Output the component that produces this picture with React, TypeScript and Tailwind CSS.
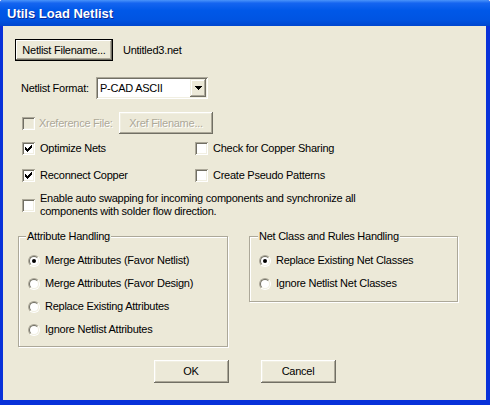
import React from "react";

const CHECK_RUNS: [number, number, number][] = [
  [6, 0, 1],
  [5, 1, 2],
  [0, 2, 1],
  [4, 2, 3],
  [0, 3, 2],
  [3, 3, 3],
  [0, 4, 5],
  [1, 5, 3],
  [2, 6, 1],
];

const CheckMark = ({ color = "#000" }: { color?: string }) => (
  <svg width="7" height="7" viewBox="0 0 7 7" shapeRendering="crispEdges">
    {CHECK_RUNS.map(([x, y, w], i) => (
      <rect key={i} x={x} y={y} width={w} height={1} fill={color} />
    ))}
  </svg>
);

const Checkbox = ({ checked = false, disabled = false }: { checked?: boolean; disabled?: boolean }) => (
  <span
    className={
      "flex size-[13px] shrink-0 items-center justify-center shadow-[inset_1px_1px_#aca899,inset_-1px_-1px_#fff,inset_2px_2px_#716f64,inset_-2px_-2px_#f1efe2] " +
      (disabled ? "bg-[#ece9d8]" : "bg-white")
    }
  >
    {checked && <CheckMark />}
  </span>
);

const Radio = ({ checked = false }: { checked?: boolean }) => (
  <span className="flex size-[12px] shrink-0 items-center justify-center rounded-full border border-t-[#aca899] border-l-[#aca899] border-b-white border-r-white">
    <span className="flex size-[10px] items-center justify-center rounded-full border border-t-[#716f64] border-l-[#716f64] border-b-[#f1efe2] border-r-[#f1efe2] bg-white">
      {checked && <span className="size-[4px] rounded-full bg-black" />}
    </span>
  </span>
);

const Button = ({
  label,
  width,
  height = 22,
  disabled = false,
  focused = false,
}: {
  label: string;
  width: string;
  height?: number;
  disabled?: boolean;
  focused?: boolean;
}) => (
  <div
    className={
      "flex shrink-0 items-center justify-center bg-[#ece9d8] " +
      width +
      (height === 23 ? " h-[23px]" : " h-[22px]") +
      (focused
        ? " shadow-[inset_0_0_0_1px_#000,inset_-2px_-2px_#716f64,inset_2px_2px_#fff,inset_-3px_-3px_#aca899]"
        : " shadow-[inset_-1px_-1px_#716f64,inset_1px_1px_#fff,inset_-2px_-2px_#aca899,inset_2px_2px_#f1efe2]")
    }
  >
    <span className={disabled ? "text-[#aca899] [text-shadow:1px_1px_#fff]" : ""}>{label}</span>
  </div>
);

const Combo = () => (
  <div className="flex h-[22px] w-[112px] items-center justify-between bg-white pl-[4px] pr-[2px] shadow-[inset_1px_1px_#aca899,inset_-1px_-1px_#fff,inset_2px_2px_#716f64,inset_-2px_-2px_#f1efe2]">
    <span>P-CAD ASCII</span>
    <div className="flex h-[18px] w-[16px] items-center justify-center bg-[#ece9d8] shadow-[inset_-1px_-1px_#716f64,inset_1px_1px_#f1efe2,inset_-2px_-2px_#aca899,inset_2px_2px_#fff]">
      <svg width="7" height="4" viewBox="0 0 7 4" shapeRendering="crispEdges">
        <rect x="0" y="0" width="7" height="1" fill="#000" />
        <rect x="1" y="1" width="5" height="1" fill="#000" />
        <rect x="2" y="2" width="3" height="1" fill="#000" />
        <rect x="3" y="3" width="1" height="1" fill="#000" />
      </svg>
    </div>
  </div>
);

const GroupBox = ({
  title,
  className,
  labelOffset,
  children,
}: {
  title: string;
  className: string;
  labelOffset: string;
  children: React.ReactNode;
}) => (
  <div
    className={
      "relative shrink-0 border border-[#aca899] pl-[9px] pt-[12px] shadow-[inset_1px_1px_#fff,1px_1px_#fff] " + className
    }
  >
    <span className={"absolute top-[-7px] bg-[#ece9d8] px-[1px] leading-[13px] " + labelOffset}>{title}</span>
    {children}
  </div>
);

const RadioRow = ({ label, checked = false }: { label: string; checked?: boolean }) => (
  <div className="flex h-[23px] items-center gap-[5px]">
    <Radio checked={checked} />
    <span>{label}</span>
  </div>
);

export default function App() {
  return (
    <div className="h-[405px] w-[490px] bg-white font-['Liberation_Sans',Arial,sans-serif]">
      <div className="flex h-full flex-col overflow-hidden rounded-t-[3px] bg-[#0831d9]">
        {/* title bar */}
        <div className="flex h-[26px] shrink-0 items-center bg-[linear-gradient(180deg,#4a94fa_0%,#1565f0_12%,#0058e8_40%,#0054e2_75%,#0047cf_100%)] pl-[7px] pt-[2px]">
          <span className="text-[13px] font-bold text-white [text-shadow:1px_1px_#0a2a9a]">Utils Load Netlist</span>
        </div>

        {/* client */}
        <div className="ml-[3px] mr-[4px] flex h-[374px] flex-col bg-[#ece9d8] text-[11px] tracking-[-0.25px] text-black">
          <div className="mt-[13px] flex h-[22px] items-center pl-[12px]">
            <Button label="Netlist Filename..." width="w-[98px]" focused />
            <span className="ml-[10px]">Untitled3.net</span>
          </div>

          <div className="mt-[16px] flex h-[22px] items-center pl-[18px]">
            <span className="w-[75px]">Netlist Format:</span>
            <Combo />
          </div>

          <div className="mt-[13px] flex h-[22px] items-center pl-[19px]">
            <Checkbox disabled />
            <span className="ml-[4px] w-[80px] text-[#aca899] [text-shadow:1px_1px_#fff]">Xreference File:</span>
            <Button label="Xref Filename..." width="w-[94px]" disabled />
          </div>

          <div className="mt-[4px] flex h-[20px] items-center pl-[19px]">
            <div className="flex w-[173px] items-center gap-[5px]">
              <Checkbox checked />
              <span>Optimize Nets</span>
            </div>
            <div className="flex items-center gap-[5px]">
              <Checkbox />
              <span>Check for Copper Sharing</span>
            </div>
          </div>

          <div className="mt-[7px] flex h-[20px] items-center pl-[19px]">
            <div className="flex w-[173px] items-center gap-[5px]">
              <Checkbox checked />
              <span>Reconnect Copper</span>
            </div>
            <div className="flex items-center gap-[5px]">
              <Checkbox />
              <span>Create Pseudo Patterns</span>
            </div>
          </div>

          <div className="mt-[7px] flex items-center gap-[5px] pl-[19px] leading-[13px]">
            <Checkbox />
            <span>
              Enable auto swapping for incoming components and synchronize all
              <br />
              components with solder flow direction.
            </span>
          </div>

          <div className="mt-[18px] flex items-start pl-[15px]">
            <GroupBox title="Attribute Handling" className="h-[111px] w-[210px]" labelOffset="left-[7px]">
              <RadioRow label="Merge Attributes (Favor Netlist)" checked />
              <RadioRow label="Merge Attributes (Favor Design)" />
              <RadioRow label="Replace Existing Attributes" />
              <RadioRow label="Ignore Netlist Attributes" />
            </GroupBox>
            <GroupBox title="Net Class and Rules Handling" className="ml-[21px] h-[66px] w-[209px]" labelOffset="left-[8px]">
              <RadioRow label="Replace Existing Net Classes" checked />
              <RadioRow label="Ignore Netlist Net Classes" />
            </GroupBox>
          </div>

          <div className="mt-[13px] flex justify-center gap-[32px]">
            <Button label="OK" width="w-[75px]" height={23} />
            <Button label="Cancel" width="w-[75px]" height={23} />
          </div>
        </div>
      </div>
    </div>
  );
}
